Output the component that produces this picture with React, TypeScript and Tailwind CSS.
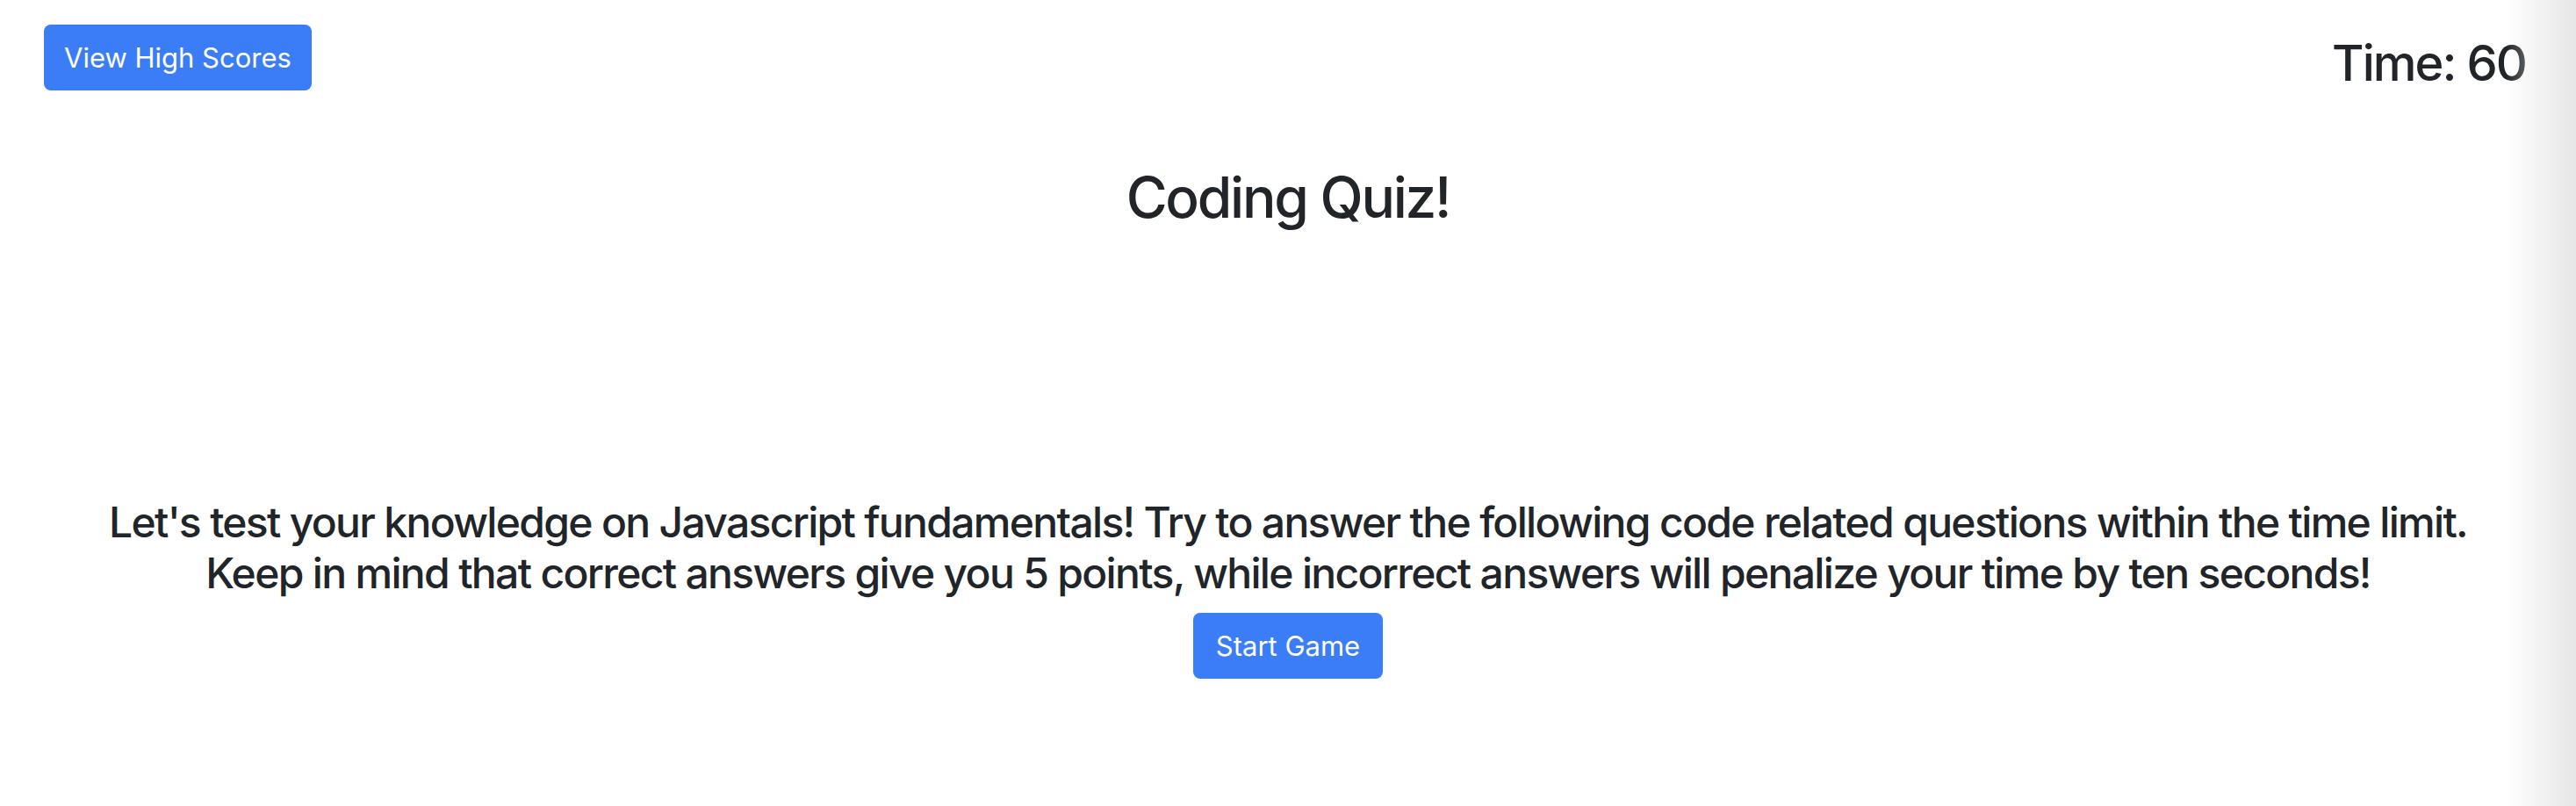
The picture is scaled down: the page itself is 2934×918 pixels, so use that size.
export default function App() {
  return (
    <div
      className="relative w-[2934px] h-[918px] bg-white text-[#212529] overflow-hidden"
      style={{ fontFamily: 'Inter, "Noto Sans", "Liberation Sans", sans-serif' }}
    >
      <div className="flex justify-between items-start pl-[50px] pr-[57px] pt-[28px]">
        <button className="h-[75px] px-[23px] rounded-[8px] bg-[#3b7df7] text-white text-[31px] leading-[75px]">
          View High Scores
        </button>
        <h3 className="mt-[11px] text-[56px] leading-[1.2] font-medium tracking-[-0.035em]">Time: 60</h3>
      </div>
      <h2 className="mt-[81px] text-center text-[64px] leading-[1.2] font-medium tracking-[-0.035em]">Coding Quiz!</h2>
      <div className="mt-[302px] flex flex-col items-center">
        <h4 className="text-center text-[48px] leading-[1.2] font-medium tracking-[-0.035em]">
          Let's test your knowledge on Javascript fundamentals! Try to answer the following code related questions within the time limit.
          <br />
          Keep in mind that correct answers give you 5 points, while incorrect answers will penalize your time by ten seconds!
        </h4>
        <button className="mt-[17px] h-[75px] px-[26px] rounded-[8px] bg-[#3b7df7] text-white text-[31px] leading-[75px]">
          Start Game
        </button>
      </div>
      <div className="absolute right-0 top-0 h-full w-[80px] bg-gradient-to-r from-white/0 to-[#e6e6e6]" />
    </div>
  );
}
